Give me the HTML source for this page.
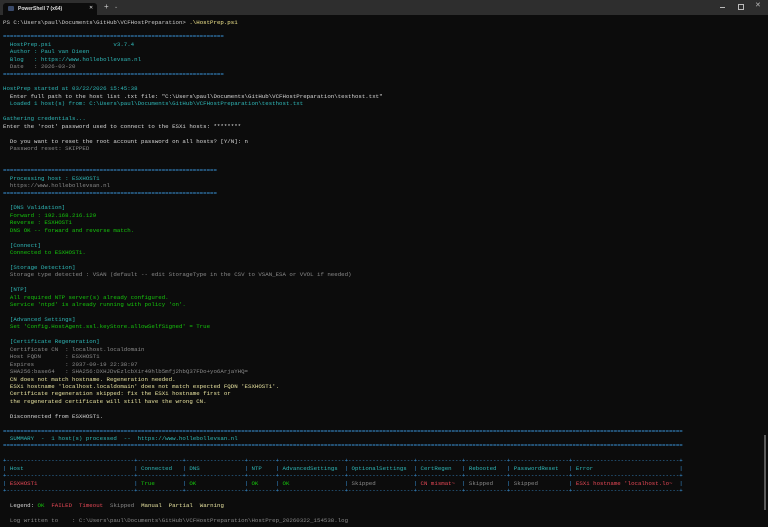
<!DOCTYPE html>
<html><head><meta charset="utf-8"><style>
html,body{margin:0;padding:0;background:#0c0c0c;width:768px;height:527px;overflow:hidden}
.bar{position:absolute;left:0;top:0;width:768px;height:15px;background:#2e2e2e}
.tab{position:absolute;left:3px;top:3px;width:94px;height:12px;background:#0c0c0c;border-radius:3px 3px 0 0;font:5px "Liberation Sans",sans-serif;color:#ddd}
pre{position:absolute;left:3px;top:18.5px;margin:0;font-family:"Liberation Mono",monospace;font-size:5.75px;line-height:7.44px;color:#cccccc;white-space:pre}
.c{color:#2fb8b8}.g{color:#16c60c}.gr{color:#8a8a8a}.y{color:#e8e3a0}.b{color:#3a96dd}.r{color:#e74856}.w{color:#d8d8d8}.yy{color:#f1e68c}
</style></head><body>
<div class="bar"></div>
<div class="tab"><span style="position:absolute;left:5px;top:3px;width:6px;height:5px;background:#3a4a6a;border-radius:1px"></span><span style="position:absolute;left:15px;top:3px;font-weight:bold">PowerShell 7 (x64)</span><span style="position:absolute;left:86px;top:2px">✕</span></div>
<div style="position:absolute;left:104px;top:2px;color:#ccc;font:8px 'Liberation Sans',sans-serif">+</div>
<div style="position:absolute;left:114px;top:4px;color:#aaa;font:5px 'Liberation Sans',sans-serif">⌄</div>
<div style="position:absolute;left:720px;top:7px;width:5px;height:1px;background:#bbb"></div>
<div style="position:absolute;left:738px;top:4px;width:4px;height:4px;border:1px solid #bbb"></div>
<div style="position:absolute;left:755px;top:1px;color:#bbb;font:7px 'Liberation Sans',sans-serif">✕</div>
<div style="position:absolute;left:764px;top:435px;width:2px;height:75px;background:#5a5a5a"></div>
<pre>PS C:\Users\paul\Documents\GitHub\VCFHostPreparation&gt; <span class="yy">.\HostPrep.ps1</span>

<span class="b">================================================================</span>
<span class="c">  HostPrep.ps1                  v3.7.4</span>
<span class="c">  Author : Paul van Dieen</span>
<span class="c">  Blog   : https://www.hollebollevsan.nl</span>
<span class="gr">  Date   : 2026-03-20</span>
<span class="b">================================================================</span>

<span class="c">HostPrep started at 03/22/2026 15:45:38</span>
<span class="w">  Enter full path to the host list .txt file: "C:\Users\paul\Documents\GitHub\VCFHostPreparation\testhost.txt"</span>
<span class="c">  Loaded 1 host(s) from: C:\Users\paul\Documents\GitHub\VCFHostPreparation\testhost.txt</span>

<span class="c">Gathering credentials...</span>
<span class="w">Enter the 'root' password used to connect to the ESXi hosts: ********</span>

<span class="w">  Do you want to reset the root account password on all hosts? [Y/N]: n</span>
<span class="gr">  Password reset: SKIPPED</span>


<span class="b">==============================================================</span>
<span class="c">  Processing host : ESXHOST1</span>
<span class="gr">  https://www.hollebollevsan.nl</span>
<span class="b">==============================================================</span>

<span class="c">  [DNS Validation]</span>
<span class="g">  Forward : 192.168.216.129</span>
<span class="g">  Reverse : ESXHOST1</span>
<span class="g">  DNS OK -- forward and reverse match.</span>

<span class="c">  [Connect]</span>
<span class="g">  Connected to ESXHOST1.</span>

<span class="c">  [Storage Detection]</span>
<span class="gr">  Storage type detected : VSAN (default -- edit StorageType in the CSV to VSAN_ESA or VVOL if needed)</span>

<span class="c">  [NTP]</span>
<span class="g">  All required NTP server(s) already configured.</span>
<span class="g">  Service 'ntpd' is already running with policy 'on'.</span>

<span class="c">  [Advanced Settings]</span>
<span class="g">  Set 'Config.HostAgent.ssl.keyStore.allowSelfSigned' = True</span>

<span class="c">  [Certificate Regeneration]</span>
<span class="gr">  Certificate CN  : localhost.localdomain</span>
<span class="gr">  Host FQDN       : ESXHOST1</span>
<span class="gr">  Expires         : 2037-09-19 22:38:07</span>
<span class="gr">  SHA256:base64   : SHA256:DXHJDvEzlcbXir49hlb5mfj2hbQ37FDo+yo6ArjaYHQ=</span>
<span class="y">  CN does not match hostname. Regeneration needed.</span>
<span class="y">  ESXi hostname 'localhost.localdomain' does not match expected FQDN 'ESXHOST1'.</span>
<span class="y">  Certificate regeneration skipped: fix the ESXi hostname first or</span>
<span class="y">  the regenerated certificate will still have the wrong CN.</span>

<span class="w">  Disconnected from ESXHOST1.</span>

<span class="b">=====================================================================================================================================================================================================</span>
<span class="c">  SUMMARY  -  1 host(s) processed  --  https://www.hollebollevsan.nl</span>
<span class="b">=====================================================================================================================================================================================================</span>

<span class="b">+-------------------------------------+-------------+-----------------+--------+-------------------+-------------------+-------------+------------+-----------------+-------------------------------+</span>
<span class="b">|</span><span class="c"> Host                                </span><span class="b">|</span><span class="c"> Connected   </span><span class="b">|</span><span class="c"> DNS             </span><span class="b">|</span><span class="c"> NTP    </span><span class="b">|</span><span class="c"> AdvancedSettings  </span><span class="b">|</span><span class="c"> OptionalSettings  </span><span class="b">|</span><span class="c"> CertRegen   </span><span class="b">|</span><span class="c"> Rebooted   </span><span class="b">|</span><span class="c"> PasswordReset   </span><span class="b">|</span><span class="c"> Error                         </span><span class="b">|</span>
<span class="b">+-------------------------------------+-------------+-----------------+--------+-------------------+-------------------+-------------+------------+-----------------+-------------------------------+</span>
<span class="b">|</span><span class="r"> ESXHOST1                            </span><span class="b">|</span><span class="g"> True        </span><span class="b">|</span><span class="g"> OK              </span><span class="b">|</span><span class="g"> OK     </span><span class="b">|</span><span class="g"> OK                </span><span class="b">|</span><span class="gr"> Skipped           </span><span class="b">|</span><span class="r"> CN mismat~  </span><span class="b">|</span><span class="gr"> Skipped    </span><span class="b">|</span><span class="gr"> Skipped         </span><span class="b">|</span><span class="r"> ESXi hostname 'localhost.lo~  </span><span class="b">|</span>
<span class="b">+-------------------------------------+-------------+-----------------+--------+-------------------+-------------------+-------------+------------+-----------------+-------------------------------+</span>

<span class="w">  Legend: </span><span class="g">OK</span>  <span class="r">FAILED</span>  <span class="r">Timeout</span>  <span class="gr">Skipped</span>  <span class="y">Manual</span>  <span class="y">Partial</span>  <span class="y">Warning</span>

<span class="gr">  Log written to    : C:\Users\paul\Documents\GitHub\VCFHostPreparation\HostPrep_20260322_154538.log</span>
</pre>
</body></html>
